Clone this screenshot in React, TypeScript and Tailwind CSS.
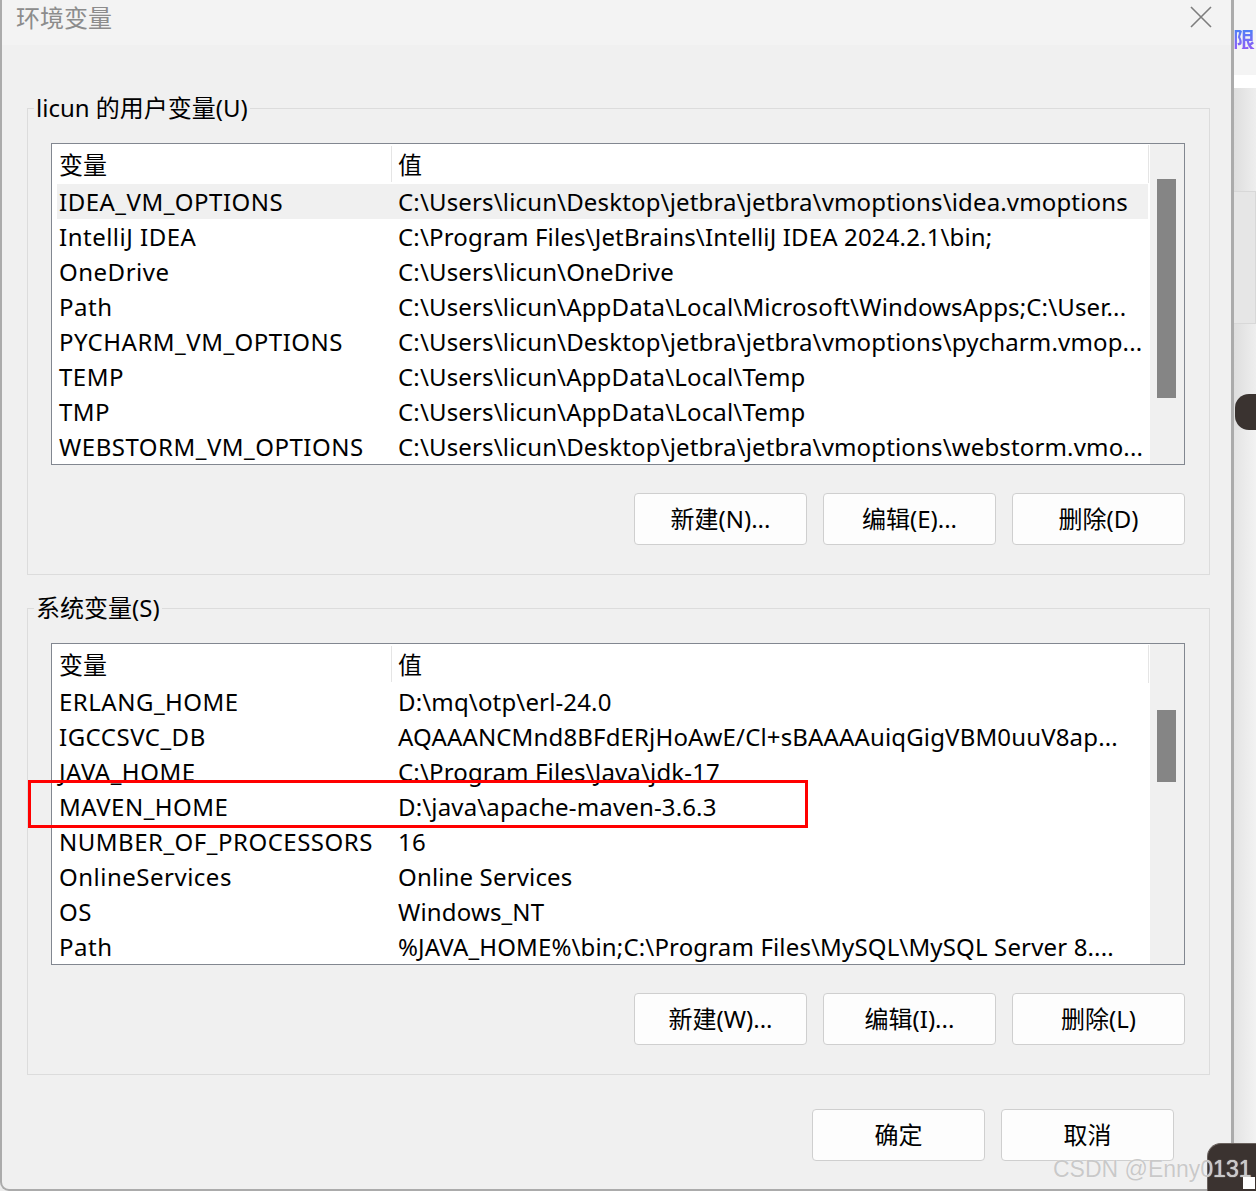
import React from "react";

type Row = [string, string];

const userRows: Row[] = [
  ["IDEA_VM_OPTIONS", "C:\\Users\\licun\\Desktop\\jetbra\\jetbra\\vmoptions\\idea.vmoptions"],
  ["IntelliJ IDEA", "C:\\Program Files\\JetBrains\\IntelliJ IDEA 2024.2.1\\bin;"],
  ["OneDrive", "C:\\Users\\licun\\OneDrive"],
  ["Path", "C:\\Users\\licun\\AppData\\Local\\Microsoft\\WindowsApps;C:\\User..."],
  ["PYCHARM_VM_OPTIONS", "C:\\Users\\licun\\Desktop\\jetbra\\jetbra\\vmoptions\\pycharm.vmop..."],
  ["TEMP", "C:\\Users\\licun\\AppData\\Local\\Temp"],
  ["TMP", "C:\\Users\\licun\\AppData\\Local\\Temp"],
  ["WEBSTORM_VM_OPTIONS", "C:\\Users\\licun\\Desktop\\jetbra\\jetbra\\vmoptions\\webstorm.vmo..."],
];

const sysRows: Row[] = [
  ["ERLANG_HOME", "D:\\mq\\otp\\erl-24.0"],
  ["IGCCSVC_DB", "AQAAANCMnd8BFdERjHoAwE/Cl+sBAAAAuiqGigVBM0uuV8ap..."],
  ["JAVA_HOME", "C:\\Program Files\\Java\\jdk-17"],
  ["MAVEN_HOME", "D:\\java\\apache-maven-3.6.3"],
  ["NUMBER_OF_PROCESSORS", "16"],
  ["OnlineServices", "Online Services"],
  ["OS", "Windows_NT"],
  ["Path", "%JAVA_HOME%\\bin;C:\\Program Files\\MySQL\\MySQL Server 8...."],
];

function Btn({ label }: { label: string }) {
  return (
    <div className="w-[173px] h-[52px] rounded-[4px] border border-[#cfcfcf] bg-[#fdfdfd] flex items-center justify-center text-[24px] leading-none text-black">
      {label}
    </div>
  );
}

function VarList({
  rows,
  highlight,
  thumbTop,
  thumbH,
}: {
  rows: Row[];
  highlight: number;
  thumbTop: string;
  thumbH: string;
}) {
  return (
    <div className="ml-[23px] mt-[20px] w-[1134px] h-[322px] border border-[#828790] bg-white flex">
      <div className="flex-1 flex flex-col overflow-hidden">
        <div className="h-[40px] flex items-center shrink-0">
          <div className="w-[339px] pl-[7px] pt-[2px] text-[24px] leading-[36px]">变量</div>
          <div className="w-px h-[36px] bg-[#e5e5e5]"></div>
          <div className="flex-1 pl-[6px] pt-[2px] text-[24px] leading-[36px]">值</div>
          <div className="w-px h-[38px] bg-[#e5e5e5] mr-[1px]"></div>
        </div>
        {rows.map((r, i) => (
          <div
            key={i}
            className={
              "h-[35px] shrink-0 ml-[5px] mr-[2px] flex items-center whitespace-nowrap text-[24px] leading-[35px] text-black " +
              (i === highlight ? "bg-[#f0f0f0]" : "")
            }
          >
            <div className="w-[341px] pl-[2px] shrink-0 tracking-[0.5px]">{r[0]}</div>
            <div className="flex-1 min-w-0 tracking-[0.15px]">{r[1]}</div>
          </div>
        ))}
      </div>
      <div className="w-[34px] bg-[#f0f0f0] shrink-0">
        <div className={"ml-[7px] w-[19px] bg-[#858585] " + thumbTop + " " + thumbH}></div>
      </div>
    </div>
  );
}

export default function App() {
  return (
    <div className="relative w-[1256px] h-[1191px] overflow-hidden flex bg-[#ececec] font-['Noto_Sans','Noto_Sans_CJK_SC',sans-serif] text-black">
      {/* dialog */}
      <div className="w-[1234px] h-[1191px] shrink-0 bg-[#f0f0f0] border-l-2 border-r-[3px] border-b-2 border-[#ababab] rounded-bl-[9px] flex flex-col">
        <div className="h-[45px] shrink-0 bg-[#f3f3f3] flex items-start justify-between pl-[14px] pr-[18px]">
          <div className="text-[24px] leading-[34px] text-[#8c8c8c] font-['Noto_Sans_CJK_SC',sans-serif]">环境变量</div>
          <svg width="24" height="24" viewBox="0 0 24 24" className="mt-[5px]">
            <path d="M2 2 L22 22 M22 2 L2 22" stroke="#7d7d7d" strokeWidth="1.6" fill="none" />
          </svg>
        </div>

        <fieldset className="mt-[48px] ml-[25px] w-[1183px] border border-[#dcdcdc] pb-[29px] min-w-0">
          <legend className="ml-[6px] px-[2px] text-[24px] leading-[30px]">licun 的用户变量(U)</legend>
          <VarList rows={userRows} highlight={0} thumbTop="mt-[35px]" thumbH="h-[219px]" />
          <div className="mt-[28px] pr-[24px] flex justify-end gap-[16px]">
            <Btn label="新建(N)..." />
            <Btn label="编辑(E)..." />
            <Btn label="删除(D)" />
          </div>
        </fieldset>

        <fieldset className="mt-[18px] ml-[25px] w-[1183px] border border-[#dcdcdc] pb-[29px] min-w-0">
          <legend className="ml-[6px] px-[2px] text-[24px] leading-[30px]">系统变量(S)</legend>
          <VarList rows={sysRows} highlight={-1} thumbTop="mt-[66px]" thumbH="h-[72px]" />
          <div className="mt-[28px] pr-[24px] flex justify-end gap-[16px]">
            <Btn label="新建(W)..." />
            <Btn label="编辑(I)..." />
            <Btn label="删除(L)" />
          </div>
        </fieldset>

        <div className="mt-[34px] pr-[57px] flex justify-end gap-[16px]">
          <Btn label="确定" />
          <Btn label="取消" />
        </div>
      </div>

      {/* background window strip */}
      <div className="flex-1 flex flex-col bg-gradient-to-r from-[#dedede] to-[#eeeeee]">
        <div className="h-[75px] bg-[#f4f4f4] flex items-center overflow-hidden">
          <span className="text-[22px] font-bold leading-none bg-gradient-to-b from-[#3b82f6] to-[#8b5cf6] bg-clip-text text-transparent font-['Noto_Sans_CJK_SC',sans-serif] -ml-[1px]">限</span>
        </div>
        <div className="h-[13px] bg-white"></div>
        <div className="h-[103px]"></div>
        <div className="h-[133px] border-y border-r border-[#d8d8d8] bg-[#e6e6e6]"></div>
        <div className="h-[70px]"></div>
        <div className="h-[36px] ml-[1px] bg-[#3a3330] rounded-l-[14px]"></div>
        <div className="flex-1 bg-gradient-to-r from-[#e4e4e4] to-[#f2f2f2]"></div>
      </div>

      {/* red annotation box */}
      <div className="absolute left-[28px] top-[780px] w-[780px] h-[48px] border-[3px] border-[#ff0000]"></div>

      {/* dark corner */}
      <div className="absolute left-[1207px] top-[1143px] w-[49px] h-[48px] bg-[#3b3330] rounded-tl-[14px] border-t border-l border-[#6a625e]"></div>
      <div className="absolute left-[1243px] top-[1177px] w-[12px] h-[12px] bg-white"></div>

      {/* watermark */}
      <div className="absolute left-[1053px] top-[1154px] text-[23px] leading-[30px] whitespace-nowrap text-[#c9c9c9] font-['Liberation_Sans',sans-serif] [text-shadow:0_0_1px_#ffffff]">
        CSDN @Enny0131
      </div>
    </div>
  );
}
